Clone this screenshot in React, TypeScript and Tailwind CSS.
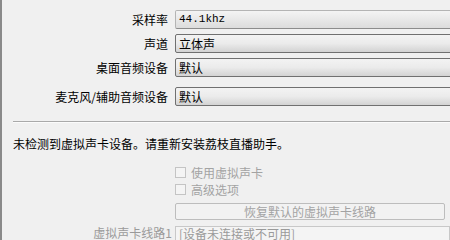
/**
 * AudioSettings - sound device panel (sample rate, channels, virtual sound card)
 */

const cjk = '"Noto Sans CJK SC", "Liberation Sans", sans-serif';

interface ComboProps {
  value: string;
  mono?: boolean;
  light?: boolean;
}

function Combo({ value, mono, light }: ComboProps) {
  return (
    <div
      className={`w-[290px] h-[19px] shrink-0 flex items-center pl-[3px] rounded-[2px] border ${
        light
          ? 'border-[#b4b4b4] border-b-[#8c8c8c] bg-gradient-to-b from-[#f4f4f4] to-[#dcdcdc]'
          : 'border-[#707070] bg-gradient-to-b from-[#f3f3f3] via-[#ebebeb] to-[#d3d3d3]'
      }`}
    >
      <span
        className={mono ? 'text-[11px] leading-none text-black' : 'text-[12px] leading-none text-black'}
        style={mono ? { fontFamily: '"Liberation Mono", monospace' } : undefined}
      >
        {value}
      </span>
    </div>
  );
}

function Row({ label, children, className = '' }: { label: string; children: React.ReactNode; className?: string }) {
  return (
    <div className={`flex items-center ${className}`}>
      <span className="w-[166px] shrink-0 text-right text-[12px] leading-none text-black">{label}</span>
      <div className="ml-[7px]">{children}</div>
    </div>
  );
}

function Check({ label }: { label: string }) {
  return (
    <div className="flex items-center ml-[173px] h-[11px]">
      <span className="w-[11px] h-[11px] border border-[#c4c4c4] bg-[#f4f4f4]" />
      <span className="ml-[5px] text-[12px] leading-none text-[#a3a3a3]">{label}</span>
    </div>
  );
}

export default function App() {
  return (
    <div
      className="w-[450px] h-[240px] overflow-hidden bg-[#f0f0f0] border-l-2 border-[#8a8a8a]"
      style={{ fontFamily: cjk }}
    >
      {/* Device combos */}
      <div className="pt-[10px] flex flex-col">
        <Row label="采样率">
          <Combo value="44.1khz" mono light />
        </Row>
        <Row label="声道" className="mt-[5px]">
          <Combo value="立体声" />
        </Row>
        <Row label="桌面音频设备" className="mt-[5px]">
          <Combo value="默认" />
        </Row>
        <Row label="麦克风/辅助音频设备" className="mt-[10px]">
          <Combo value="默认" />
        </Row>
      </div>

      {/* Separator */}
      <div className="mt-[15px] ml-[11px] h-px bg-[#a9a9a9]" />
      <div className="ml-[11px] h-px bg-[#fbfbfb]" />

      {/* Virtual sound card */}
      <p className="mt-[15px] ml-[11px] text-[12px] leading-none text-black">
        未检测到虚拟声卡设备。请重新安装荔枝直播助手。
      </p>

      <div className="mt-[17px] flex flex-col gap-[6px]">
        <Check label="使用虚拟声卡" />
        <Check label="高级选项" />
      </div>

      <div className="mt-[8px] ml-[173px] w-[270px] h-[17px] flex items-center justify-center border border-[#bdbdbd] rounded-[2px] bg-[#f2f2f2]">
        <span className="text-[12px] leading-none text-[#a3a3a3]">恢复默认的虚拟声卡线路</span>
      </div>

      <div className="mt-[6px] flex items-start">
        <span className="w-[170px] shrink-0 pt-[1px] text-right text-[12px] leading-none text-[#9a9a9a]">虚拟声卡线路1</span>
        <div className="ml-[3px] w-[290px] h-[20px] flex items-start border border-[#c8c8c8] bg-[#f4f4f4] pl-[3px] pt-[1px]">
          <span className="text-[12px] leading-none text-[#9a9a9a]">[设备未连接或不可用]</span>
        </div>
      </div>
    </div>
  );
}
